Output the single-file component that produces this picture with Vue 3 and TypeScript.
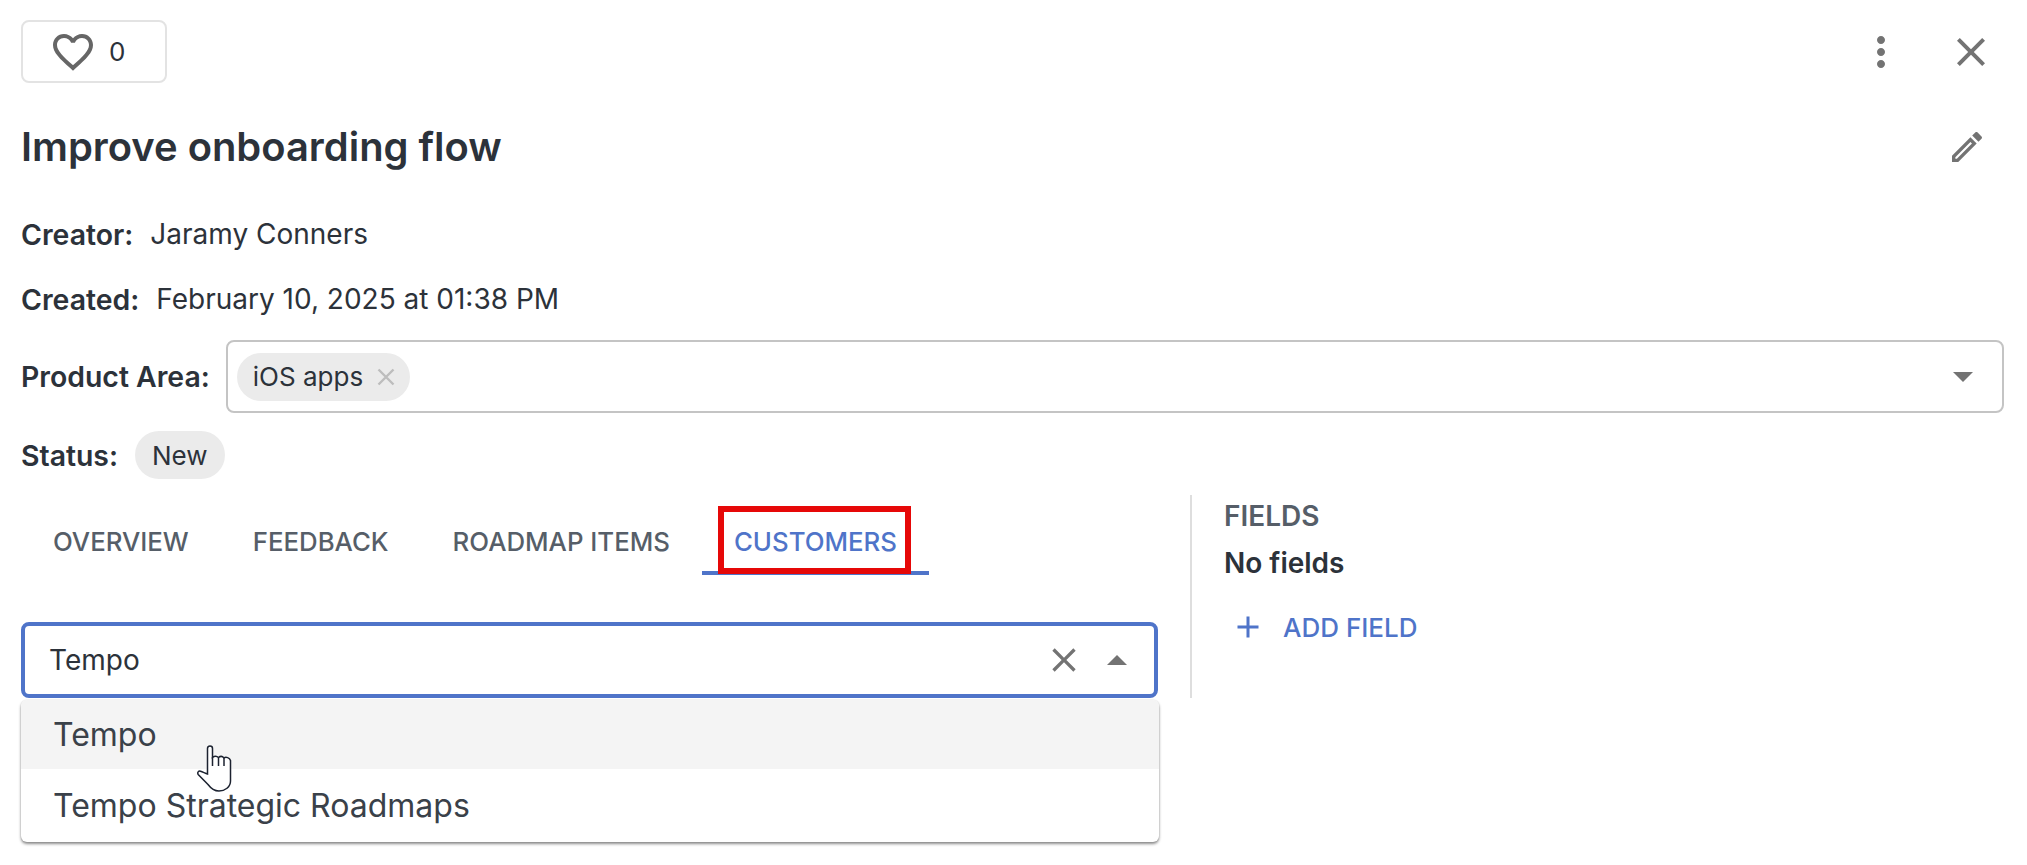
<script setup lang="ts">
const tabs = ['OVERVIEW', 'FEEDBACK', 'ROADMAP ITEMS', 'CUSTOMERS']
const options = ['Tempo', 'Tempo Strategic Roadmaps']
</script>

<template>
  <div class="page">
    <div class="top">
      <button class="like">
        <svg class="heart" viewBox="0 0 24 24"><path d="M16.5 3c-1.74 0-3.41.81-4.5 2.09C10.91 3.81 9.24 3 7.5 3 4.42 3 2 5.42 2 8.5c0 3.78 3.4 6.86 8.55 11.54L12 21.35l1.45-1.32C18.6 15.36 22 12.28 22 8.5 22 5.42 19.58 3 16.5 3zm-4.4 15.55l-.1.1-.1-.1C7.14 14.24 4 11.39 4 8.5 4 6.5 5.5 5 7.5 5c1.54 0 3.04.99 3.57 2.36h1.87C13.46 5.99 14.96 5 16.5 5c2 0 3.5 1.5 3.5 3.5 0 2.89-3.14 5.74-7.9 10.05z"/></svg>
        <span>0</span>
      </button>
      <div class="actions">
        <svg class="ic48" viewBox="0 0 24 24"><path d="M12 8c1.1 0 2-.9 2-2s-.9-2-2-2-2 .9-2 2 .9 2 2 2zm0 2c-1.1 0-2 .9-2 2s.9 2 2 2 2-.9 2-2-.9-2-2-2zm0 6c-1.1 0-2 .9-2 2s.9 2 2 2 2-.9 2-2-.9-2-2-2z"/></svg>
        <svg class="ic48" viewBox="0 0 24 24"><path d="M19 6.41L17.59 5 12 10.59 6.41 5 5 6.41 10.59 12 5 17.59 6.41 19 12 13.41 17.59 19 19 17.59 13.41 12z"/></svg>
      </div>
    </div>

    <div class="title-row">
      <h1>Improve onboarding flow</h1>
      <svg class="pencil" viewBox="0 0 24 24"><path d="M3 17.25V21h3.75L17.81 9.94l-3.75-3.75L3 17.25zM5.92 19H5v-.92l9.06-9.06.92.92L5.92 19zM20.71 5.63l-2.34-2.34c-.2-.2-.45-.29-.71-.29s-.51.1-.7.29l-1.83 1.83 3.75 3.75 1.83-1.83c.39-.39.39-1.02 0-1.41z"/></svg>
    </div>

    <div class="meta first"><b>Creator:</b><span>Jaramy Conners</span></div>
    <div class="meta second"><b>Created:</b><span>February 10, 2025 at 01:38 PM</span></div>

    <div class="area">
      <b>Product Area:</b>
      <div class="select">
        <span class="chip">iOS apps
          <svg class="chip-x" viewBox="0 0 18 18"><path d="M1.5 1.5l15 15M16.5 1.5l-15 15"/></svg>
        </span>
        <svg class="caret" viewBox="0 0 20 10"><path d="M0 0h20L10 10z"/></svg>
      </div>
    </div>

    <div class="status"><b>Status:</b><span class="chip plain">New</span></div>

    <div class="main">
      <div class="left">
        <div class="tabs">
          <div v-for="t in tabs" :key="t" class="tab" :class="{ active: t === 'CUSTOMERS' }">
            {{ t }}
            <i v-if="t === 'CUSTOMERS'" class="marker"></i>
          </div>
        </div>
        <div class="combo">
          <span class="value">Tempo</span>
          <svg class="clear" viewBox="0 0 24 24"><path d="M19 6.41L17.59 5 12 10.59 6.41 5 5 6.41 10.59 12 5 17.59 6.41 19 12 13.41 17.59 19 19 17.59 13.41 12z"/></svg>
          <svg class="caret up" viewBox="0 0 20 10"><path d="M0 10h20L10 0z"/></svg>
          <div class="menu">
            <div v-for="(o, i) in options" :key="o" class="opt" :class="{ hover: i === 0 }">{{ o }}</div>
            <svg class="hand" viewBox="0 0 36 48">
              <path d="M10.5 29V3.500C10.500 1.800 11.600 1 13 1s2.500.8 2.500 2.500V12.500c2-1.600 4.500-1.400 6 0 1.700-1.400 4-1.300 5.500.4 2-1.200 5.600-.3 6.500 2.600V36c0 6-5.500 10-11.500 10-5.500 0-8-2.500-11-6.500L1.200 29.500C0 27.500 1.500 25.700 3.500 26.200c2.500.8 5 2.300 7 2.800z"/>
              <path d="M15.500 12v9M21.500 12.500v8.500M27 13v8"/>
            </svg>
          </div>
        </div>
      </div>
      <div class="right">
        <div class="fields">FIELDS</div>
        <div class="nofields">No fields</div>
        <div class="add">
          <svg class="plus" viewBox="0 0 24 24"><path d="M19 13h-6v6h-2v-6H5v-2h6V5h2v6h6v2z"/></svg>
          <span>ADD FIELD</span>
        </div>
      </div>
    </div>
  </div>
</template>

<style>
html, body { background: #fff; margin: 0; }
</style>

<style scoped>
.page {
  box-sizing: border-box;
  width: 2027px;
  height: 865px;
  padding: 20px 23px 0 21px;
  font-family: Inter, "Noto Sans", sans-serif;
  font-size: 28px;
  color: #2c323a;
  background: #fff;
  overflow: hidden;
}
svg { display: block; flex: none; fill: #737373; }
.top { display: flex; justify-content: space-between; align-items: center; height: 63px; }
.like {
  box-sizing: border-box;
  width: 146px;
  height: 63px;
  display: flex;
  align-items: center;
  gap: 12px;
  padding: 0 0 0 26px;
  border: 2px solid #e3e3e3;
  border-radius: 8px;
  background: #fff;
  color: #2c323a;
  font: inherit;
  font-size: 26px;
}
.heart { width: 48px; height: 48px; fill: #666; }
.actions { display: flex; gap: 42px; margin-right: 9px; align-items: center; }
.ic48 { width: 48px; height: 48px; }
.title-row { display: flex; justify-content: space-between; align-items: center; height: 60px; margin-top: 34px; }
h1 { margin: 0; font-size: 39.900px; font-weight: 600; line-height: 60px; }
.pencil { width: 40px; height: 40px; margin-right: 17px; }
.meta { display: flex; align-items: center; height: 40px; gap: 17px; }
.first { margin-top: 37px; }
.second { margin-top: 25px; }
b { font-weight: 600; font-size: 28.400px; }
.area { display: flex; align-items: center; gap: 16px; margin-top: 21px; }
.select {
  box-sizing: border-box;
  flex: 1;
  height: 73px;
  display: flex;
  align-items: center;
  justify-content: space-between;
  padding: 0 29px 0 9px;
  border: 2px solid #c4c4c4;
  border-radius: 8px;
}
.chip {
  box-sizing: border-box;
  height: 48px;
  display: inline-flex;
  align-items: center;
  gap: 14px;
  padding: 0 15px 0 16px;
  border-radius: 24px;
  background: #ebebeb;
  font-size: 26px;
}
.plain { padding: 0 17px; }
.chip-x { width: 18px; height: 18px; fill: none; stroke: #bdbdbd; stroke-width: 2.400; }
.caret { width: 20px; height: 10px; }
.status { display: flex; align-items: center; gap: 17px; margin-top: 18px; }
.main { display: flex; margin-top: 16px; }
.left { width: 1137px; padding-right: 32px; border-right: 2px solid #dedede; height: 203px; }
.tabs { display: flex; }
.tab {
  position: relative;
  box-sizing: border-box;
  height: 80px;
  padding: 32px 32px 14px;
  line-height: 30px;
  font-size: 25.800px;
  font-weight: 500;
  color: #565e68;
  border-bottom: 4px solid transparent;
  white-space: nowrap;
}
.active { color: #4f74c9; border-bottom-color: #4f74c9; }
.marker {
  position: absolute;
  left: 16px;
  top: 11px;
  box-sizing: border-box;
  width: 193px;
  height: 68px;
  border: 6px solid #e60808;
}
.combo {
  position: relative;
  box-sizing: border-box;
  height: 76px;
  margin-top: 47px;
  display: flex;
  align-items: center;
  padding: 0 27px 0 24px;
  border: 4px solid #4f74c9;
  border-radius: 8px;
}
.value { flex: 1; font-size: 28px; }
.clear { width: 40px; height: 40px; margin-right: 23px; }
.menu {
  position: absolute;
  top: calc(100% + 6px);
  left: -4px;
  right: -5px;
  background: #fff;
  border-radius: 6px;
  box-shadow: 0 2px 3px rgba(0, 0, 0, .45), 0 0 2px rgba(0, 0, 0, .12);
}
.opt { display: flex; align-items: center; height: 71px; padding-left: 32px; font-size: 32px; color: #3a4149; border-radius: 6px; }
.hover { height: 69px; background: #f4f4f4; border-radius: 6px 6px 0 0; }
.opt:last-of-type { height: 73px; }
.hand {
  position: absolute;
  left: 176px;
  top: 45px;
  width: 36px;
  height: 48px;
  fill: #fff;
  stroke: #1c2230;
  stroke-width: 1.5;
}
.right { padding-left: 32px; }
.fields { margin-top: 6px; line-height: 30px; font-size: 28px; font-weight: 600; color: #565e68; }
.nofields { margin-top: 17px; line-height: 30px; font-size: 28px; font-weight: 600; }
.add { display: flex; align-items: center; gap: 17px; height: 40px; margin-top: 29px; padding-left: 6px; color: #4f74c9; font-size: 26px; font-weight: 500; }
.plus { width: 36px; height: 36px; fill: #4f74c9; }
</style>
